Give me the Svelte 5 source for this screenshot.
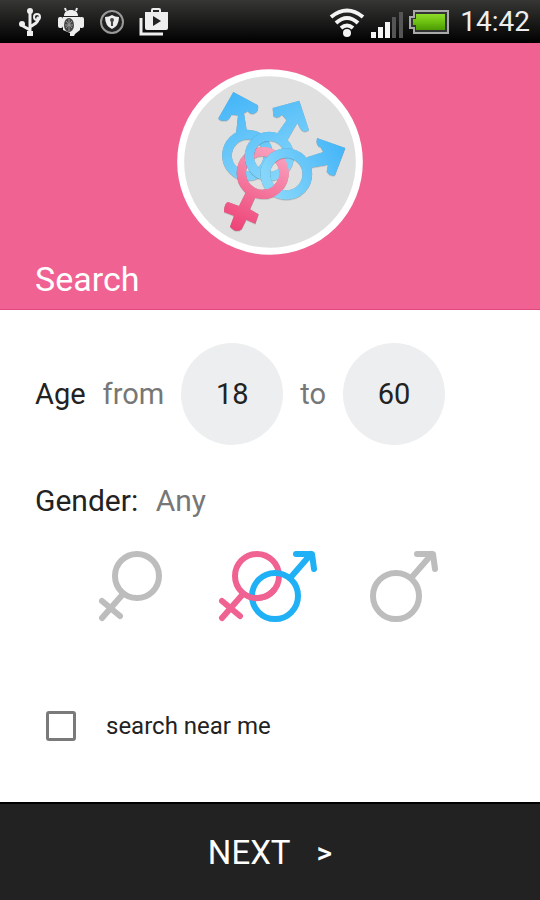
<script>
  let from = $state(18);
  let to = $state(60);
  let gender = $state('any');
  let nearMe = $state(false);

  const labels = { female: 'Female', any: 'Any', male: 'Male' };
</script>

<div class="screen">
  <div class="status-bar">
    <div class="group left">
      <svg width="24" height="30" viewBox="0 0 24 30" fill="none" stroke="#eee" stroke-width="3">
        <path d="M12 3v23M12 23l-7-4-1-3M12 20l6-4c2-2 3-4 1-6" />
        <circle cx="12" cy="4" r="3" fill="#eee" stroke="none" />
        <circle cx="4" cy="17" r="3" fill="#eee" stroke="none" />
        <circle cx="19" cy="10" r="3" stroke-width="2" />
        <path d="M9 24h6v5H9z" fill="#eee" stroke="none" />
      </svg>
      <svg width="28" height="30" viewBox="0 0 28 30" fill="#eee">
        <path d="M7 9c0-4 3-6 7-6s7 2 7 6z" />
        <path d="M9 4L8 1M19 4l1-3" stroke="#eee" stroke-width="2" />
        <path d="M6 10h17v13l-5 4-1 2h-4v-3l-7-3z" />
        <rect x="1" y="10" width="5" height="11" rx="2" />
        <rect x="22" y="10" width="5" height="11" rx="2" />
        <ellipse cx="12" cy="18" rx="5" ry="7" fill="#444" />
        <path d="M9 14l6 7M15 14l-6 7M8 18h8M12 12v12" stroke="#999" />
      </svg>
      <svg width="24" height="30" viewBox="0 0 24 30">
        <circle cx="12" cy="15" r="11" fill="#222" stroke="#999" stroke-width="2" />
        <path d="M5 10q4 0 7-2 3 2 7 2 0 9-7 12-7-3-7-12z" fill="#eee" />
        <circle cx="12" cy="13" r="2" fill="#444" />
        <path d="M12 14v5" stroke="#444" stroke-width="2" />
      </svg>
      <svg width="30" height="30" viewBox="0 0 30 30">
        <path d="M2 11v16h22" fill="none" stroke="#eee" stroke-width="3" />
        <path d="M13 6V3q0-1 1-1h6q1 0 1 1v3" fill="none" stroke="#eee" stroke-width="2" />
        <path d="M6 5h23v16q0 2-2 2H8q-2 0-2-2z" fill="#eee" />
        <path d="M14 9v10l8-5z" fill="#222" />
      </svg>
    </div>
    <div class="group right">
      <svg width="36" height="30" viewBox="0 0 36 30" fill="none" stroke="#f4f4f4" stroke-width="4">
        <path d="M2 10q16-13 32 0" />
        <path d="M7 16q11-10 22 0" />
        <path d="M12 21q6-5 12 0" />
        <circle cx="18" cy="26" r="4" fill="#f4f4f4" stroke="none" />
      </svg>
      <svg class="signal" width="32" height="26" viewBox="0 0 32 26" fill="#f4f4f4">
        <rect x="0" y="20" width="5" height="6" />
        <rect x="7" y="15" width="5" height="11" />
        <rect x="14" y="10" width="5" height="16" />
        <rect x="21" y="5" width="4" height="21" fill="#555" />
        <rect x="28" y="0" width="4" height="26" fill="#555" />
      </svg>
      <svg width="40" height="24" viewBox="0 0 40 24">
        <defs>
          <linearGradient id="charge" x2="0" y2="1">
            <stop offset="0" stop-color="#8fdc2a" />
            <stop offset="0.5" stop-color="#6cc010" />
            <stop offset="1" stop-color="#4c9a04" />
          </linearGradient>
        </defs>
        <path d="M5 1h34v22H5v-5H1V7h4z" fill="#333" stroke="#aaa" stroke-width="2" />
        <path d="M7 4h29v16H7v-5H4V9h3z" fill="url(#charge)" />
      </svg>
      <span class="clock">14:42</span>
    </div>
  </div>

  <header>
    <svg class="logo" viewBox="21 27 558 558" role="img" aria-label="Gender symbols">
      <defs>
        <linearGradient id="blue" gradientUnits="userSpaceOnUse" x1="160" y1="100" x2="280" y2="380">
          <stop offset="0" stop-color="#42b4f8" />
          <stop offset="1" stop-color="#86d6fa" />
        </linearGradient>
        <linearGradient id="blue-right" gradientUnits="userSpaceOnUse" x1="520" y1="240" x2="300" y2="370">
          <stop offset="0" stop-color="#42b4f8" />
          <stop offset="1" stop-color="#86d6fa" />
        </linearGradient>
        <linearGradient id="pink" gradientUnits="userSpaceOnUse" x1="320" y1="260" x2="200" y2="510">
          <stop offset="0" stop-color="#f9a4c0" />
          <stop offset="1" stop-color="#ee4478" />
        </linearGradient>
      </defs>
      <circle cx="300" cy="306" r="268" fill="#e0e0e0" stroke="#fff" stroke-width="21" />
      <g class="shaded">
        <path d="M145 175L190 96 264 136Q268 158 248 162 236 160 234 153L222 160 232 222 198 222 204 166 184 164Q178 182 164 182 148 184 145 175z" fill="url(#blue)" />
        <circle cx="233" cy="286" r="62" fill="none" stroke="url(#blue)" stroke-width="29" />
      </g>
      <g class="shaded">
        <circle cx="278" cy="339" r="64" fill="none" stroke="url(#pink)" stroke-width="28" />
        <path d="M228 395L256 412 240 448 266 463 256 491 229 479 215 508Q198 520 180 500L192 467 162 456Q162 430 174 426L207 438z" fill="url(#pink)" />
      </g>
      <g class="shaded">
        <path d="M308 144L388 122 417 210Q400 222 390 204L382 188 350 244 318 226 350 180 336 164Q322 178 310 168z" fill="url(#blue)" />
        <circle cx="298" cy="289" r="60" fill="none" stroke="url(#blue)" stroke-width="28" />
      </g>
      <path d="M278 275A64 64 0 0 1 342 339" fill="none" stroke="url(#pink)" stroke-width="28" />
      <g class="shaded">
        <path d="M441 234L526 264 495 346Q478 350 470 334L474 314 418 324 410 292 460 276 452 262Q436 258 441 234z" fill="url(#blue-right)" />
        <circle cx="349" cy="342" r="63" fill="none" stroke="url(#blue-right)" stroke-width="29" />
      </g>
      <path d="M338 317A64 64 0 0 1 278 403" fill="none" stroke="url(#pink)" stroke-width="28" />
    </svg>
    <h1>Search</h1>
  </header>

  <main>
    <div class="age">
      <span>Age</span>
      <label for="from">from</label>
      <input id="from" inputmode="numeric" bind:value={from} />
      <label for="to">to</label>
      <input id="to" inputmode="numeric" bind:value={to} />
    </div>

    <div class="gender">Gender: <span class="muted">{labels[gender]}</span></div>

    <div class="options">
      <button class:off={gender !== 'female'} aria-label="Female" onclick={() => (gender = 'female')}>
        <svg width="66" height="74" viewBox="0 0 66 74" class="female">
          <circle cx="39" cy="27" r="22" />
          <path d="M25 45L4 69M4 52l18 15" />
        </svg>
      </button>
      <button class:off={gender !== 'any'} aria-label="Any" onclick={() => (gender = 'any')}>
        <svg width="100" height="74" viewBox="0 0 100 74">
          <g class="female">
            <circle cx="39" cy="27" r="22" />
            <path d="M25 45L4 69M4 52l18 15" />
          </g>
          <g class="male">
            <circle cx="57" cy="47" r="23" />
            <path d="M73 28L93 5M78 5h16l2 15" />
          </g>
          <path class="female" d="M56 41A22 22 0 0 1 32 48" />
        </svg>
      </button>
      <button class:off={gender !== 'male'} aria-label="Male" onclick={() => (gender = 'male')}>
        <svg width="70" height="74" viewBox="31 0 70 74" class="male">
          <circle cx="57" cy="47" r="23" />
          <path d="M73 28L93 5M78 5h16l2 15" />
        </svg>
      </button>
    </div>

    <label class="near">
      <input type="checkbox" bind:checked={nearMe} />
      search near me
    </label>
  </main>

  <button class="next"><span>NEXT</span><span class="chevron">&gt;</span></button>
</div>

<style>
  :global(body) {
    background: #fff;
  }

  .screen {
    display: flex;
    flex-direction: column;
    min-height: 100vh;
    font-family: Roboto, sans-serif;
    font-size: 29px;
    color: #222;
  }

  svg {
    display: block;
  }

  .status-bar {
    display: flex;
    justify-content: space-between;
    align-items: center;
    height: 43px;
    padding: 0 10px 0 18px;
    background: linear-gradient(#363634, #000);
  }

  .group {
    display: flex;
    align-items: center;
  }

  .left {
    gap: 15px;
  }

  .right {
    gap: 6px;
  }

  .signal {
    margin-top: 6px;
  }

  .clock {
    margin-left: 5px;
    font-size: 28px;
    color: #eee;
  }

  header {
    display: flex;
    flex-direction: column;
    padding: 26px 35px 10px;
    background: #f06292;
    border-bottom: 1px solid #e04880;
  }

  .logo {
    align-self: center;
    width: 186px;
    height: 186px;
  }

  .shaded {
    filter: drop-shadow(0 1px 2px rgba(0, 0, 0, 0.4));
  }

  h1 {
    margin: 4px 0 0;
    font-size: 34px;
    font-weight: 400;
    line-height: 40px;
    color: #fff;
  }

  main {
    flex: 1;
    padding: 33px 35px;
  }

  .age {
    display: flex;
    align-items: center;
    gap: 17px;
  }

  .age label,
  .muted {
    color: #777;
  }

  .age input {
    box-sizing: border-box;
    width: 102px;
    height: 102px;
    padding: 0;
    border: 0;
    border-radius: 50%;
    background: #eceeef;
    color: #222;
    font: inherit;
    text-align: center;
  }

  .gender {
    margin-top: 36px;
    font-size: 30px;
    line-height: 40px;
  }

  .muted {
    margin-left: 10px;
  }

  .options {
    display: grid;
    grid-template-columns: repeat(3, 1fr);
    justify-items: center;
    margin-top: 28px;
    padding: 0 31px 0 27px;
  }

  .options button {
    padding: 0;
    border: 0;
    background: none;
  }

  .options svg {
    fill: none;
    stroke-width: 6px;
    stroke-linecap: round;
    stroke-linejoin: round;
  }

  .female {
    stroke: #f06292;
  }

  .male {
    stroke: #1fb0f5;
  }

  .off .female,
  .off .male {
    stroke: #bdbdbd;
  }

  .near {
    display: flex;
    align-items: center;
    gap: 30px;
    margin-top: 87px;
    padding-left: 11px;
    font-size: 24px;
    line-height: 32px;
  }

  .near input {
    appearance: none;
    box-sizing: border-box;
    width: 30px;
    height: 30px;
    margin: 0;
    border: 3px solid #7a7a7a;
    border-radius: 3px;
  }

  .near input:checked {
    background: #f06292;
  }

  .next {
    display: flex;
    justify-content: center;
    align-items: center;
    gap: 26px;
    height: 98px;
    border: 0;
    border-top: 2px solid #000;
    background: #222;
    color: #fff;
    font: 33px Roboto, sans-serif;
  }

  .chevron {
    font-size: 30px;
    font-weight: 500;
  }
</style>
